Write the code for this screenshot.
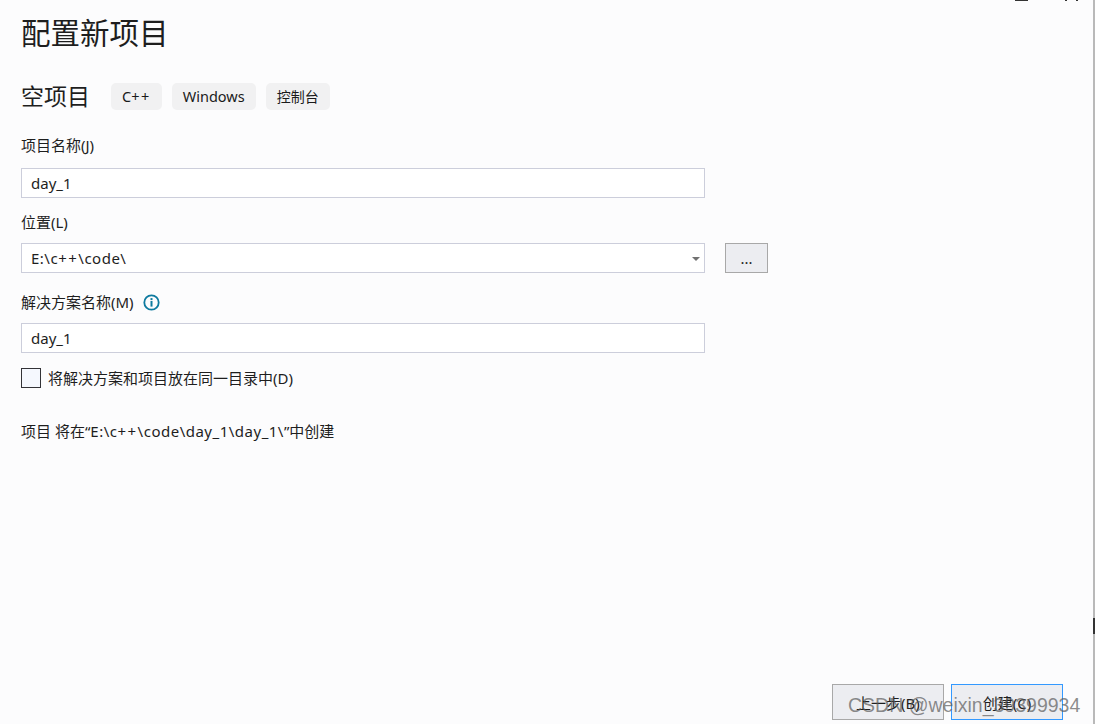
<script>
</script>

<div class="page">
  <main class="form">
    <h1>配置新项目</h1>
    <div class="template">
      <h2>空项目</h2>
      <div class="tags">
        <span class="tag">C<span class="plus">++</span></span>
        <span class="tag">Windows</span>
        <span class="tag cjk">控制台</span>
      </div>
    </div>

    <label class="name-label" for="project">项目名称(J)</label>
    <input id="project" value="day_1" />

    <label class="place-label" for="place">位置(L)</label>
    <div class="place-row">
      <div class="combo" id="place" role="combobox" aria-controls="place" aria-expanded="false">
        <span class="latin">E:\c<span class="plus">++</span>\code\</span>
        <span class="arrow"></span>
      </div>
      <button class="browse">...</button>
    </div>

    <div class="solution-label">
      <label for="solution">解决方案名称(M)</label>
      <svg width="17" height="17" viewBox="0 0 17 17" aria-hidden="true">
        <circle cx="8.5" cy="8.5" r="7.2" fill="none" stroke="#0e7a9f" stroke-width="1.8" />
        <rect x="7.5" y="7" width="2" height="5.6" fill="#0e7a9f" />
        <rect x="7.5" y="4.1" width="2" height="2" fill="#0e7a9f" />
      </svg>
    </div>
    <input id="solution" value="day_1" />

    <div class="check-row">
      <span class="check"></span>
      <span>将解决方案和项目放在同一目录中(D)</span>
    </div>

    <p class="path">项目 将在“<span class="latin">E:\c<span class="plus">++</span>\code\day_1\day_1\</span>”中创建</p>
  </main>

  <footer>
    <button class="action">上一步(B)</button>
    <button class="action primary">创建(C)</button>
  </footer>

  <span class="watermark">CSDN @weixin_39399934</span>

  <!-- bits of the window behind that are cut off by the screenshot -->
  <span class="scrap minimize"></span>
  <span class="scrap close-a"></span>
  <span class="scrap close-b"></span>
  <span class="scrap edge"></span>
</div>

<style>
  :global(body) {
    background: #fcfcfd;
  }
  .page {
    position: relative;
    height: 724px;
    box-sizing: border-box;
    display: flex;
    flex-direction: column;
    justify-content: space-between;
    border-right: 2px solid #b9b9b9;
    font-family: "Noto Sans", "Noto Sans CJK SC", sans-serif;
    font-size: 15px;
    color: #1e1e1e;
  }
  .form {
    display: flex;
    flex-direction: column;
    align-items: flex-start;
    padding: 11px 0 0 21px;
  }
  h1 {
    margin: 0;
    font-size: 29.5px;
    font-weight: 400;
    line-height: 44px;
  }
  .template {
    display: flex;
    align-items: center;
    margin-top: 28px;
  }
  h2 {
    margin: 0;
    font-size: 23px;
    font-weight: 400;
    line-height: 27px;
  }
  .tags {
    display: flex;
    gap: 10px;
    margin-left: 21px;
  }
  .tag {
    box-sizing: border-box;
    display: flex;
    align-items: center;
    justify-content: center;
    height: 27px;
    padding: 0 11px 2px;
    background: #f1f1f2;
    border-radius: 5px;
    font-size: 14.5px;
    color: #1a1a1a;
  }
  .cjk {
    font-size: 14px;
  }
  .plus {
    letter-spacing: 1.5px;
  }
  .latin {
    letter-spacing: 0.5px;
  }
  label {
    line-height: 20px;
  }
  .name-label {
    margin-top: 25px;
  }
  input,
  .combo {
    box-sizing: border-box;
    width: 684px;
    height: 30px;
    margin: 0;
    padding: 0 9px;
    background: #fff;
    border: 1px solid #cccedb;
    border-radius: 0;
    font: inherit;
    color: #1e1e1e;
    outline: none;
  }
  #project {
    margin-top: 13px;
  }
  .place-label {
    margin-top: 14px;
  }
  .place-row {
    display: flex;
    gap: 20px;
    margin-top: 11px;
  }
  .combo {
    position: relative;
    display: flex;
    align-items: center;
  }
  .arrow {
    position: absolute;
    right: 4px;
    top: 13px;
    border-left: 4px solid transparent;
    border-right: 4px solid transparent;
    border-top: 4px solid #717171;
  }
  .browse {
    box-sizing: border-box;
    width: 43px;
    height: 30px;
    padding: 0;
    background: #ecedf1;
    border: 1px solid #a8a8a8;
    font: inherit;
    color: #1e1e1e;
  }
  .solution-label {
    display: flex;
    align-items: center;
    gap: 9px;
    margin-top: 19px;
    height: 20px;
  }
  #solution {
    margin-top: 11px;
  }
  .check-row {
    display: flex;
    align-items: center;
    gap: 7px;
    margin-top: 15px;
    line-height: 20px;
  }
  .check {
    box-sizing: border-box;
    width: 20px;
    height: 20px;
    background: #f5f8fe;
    border: 1px solid #333337;
  }
  .path {
    margin: 33px 0 0;
    line-height: 20px;
  }
  footer {
    display: flex;
    justify-content: flex-end;
    gap: 7px;
    padding: 0 30px 4px 0;
  }
  .action {
    box-sizing: border-box;
    width: 112px;
    height: 36px;
    padding: 0;
    background: #ecedf1;
    border: 1px solid #a8a8a8;
    font: inherit;
    color: #1e1e1e;
  }
  .primary {
    border-color: #3399ff;
  }
  .watermark {
    position: absolute;
    left: 848px;
    top: 692px;
    font-family: "Liberation Sans", sans-serif;
    font-size: 19.5px;
    line-height: 26px;
    color: rgba(90, 90, 90, 0.7);
    white-space: nowrap;
  }
  .scrap {
    position: absolute;
    background: #333;
  }
  .minimize {
    left: 1015px;
    top: 0;
    width: 13px;
    height: 1px;
  }
  .close-a {
    left: 1065px;
    top: 0;
    width: 2px;
    height: 1px;
  }
  .close-b {
    left: 1076px;
    top: 0;
    width: 2px;
    height: 1px;
  }
  .edge {
    left: 1093px;
    top: 618px;
    width: 2px;
    height: 16px;
  }
</style>
